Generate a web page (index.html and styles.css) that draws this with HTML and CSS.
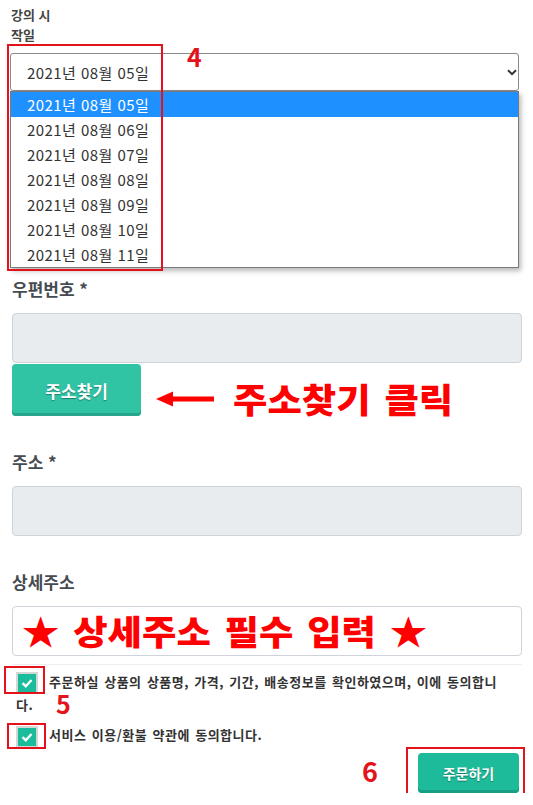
FILE: index.html
```html
<!DOCTYPE html>
<html lang="ko">
<head>
<meta charset="utf-8">
<title>주문하기</title>
<link rel="stylesheet" href="styles.css">
</head>
<body>
<main class="form">
  <section class="field-date">
    <label class="label-narrow">강의 시작일</label>
    <div class="select-wrap">
      <div class="select">
        <span>2021년 08월 05일</span>
        <svg class="chev" width="10" height="7" viewBox="0 0 10 7"><path d="M1 1.2 L5 5.2 L9 1.2" fill="none" stroke="#333" stroke-width="2"/></svg>
      </div>
      <ul class="listbox">
        <li class="active">2021년 08월 05일</li>
        <li>2021년 08월 06일</li>
        <li>2021년 08월 07일</li>
        <li>2021년 08월 08일</li>
        <li>2021년 08월 09일</li>
        <li>2021년 08월 10일</li>
        <li>2021년 08월 11일</li>
      </ul>
      <span class="mark mark-date"></span>
      <span class="num num-4">4</span>
    </div>
  </section>

  <section class="field field-first">
    <label class="label">우편번호 *</label>
    <div class="input input-gray"></div>
    <div class="find-row">
      <button class="btn btn-find">주소찾기</button>
      <div class="annot">
        <svg width="58" height="16" viewBox="0 0 58 16"><polygon points="0,8 17,0.5 17,15.5" fill="#f00"/><rect x="15" y="5.5" width="43" height="5" fill="#f00"/></svg>
        <span class="big">주소찾기 클릭</span>
      </div>
    </div>
  </section>

  <section class="field">
    <label class="label">주소 *</label>
    <div class="input input-gray"></div>
  </section>

  <section class="field">
    <label class="label">상세주소</label>
    <div class="input input-white"><span class="big">★ 상세주소 필수 입력 ★</span></div>
  </section>

  <hr class="divider">

  <div class="agree">
    <p class="agree-item agree-one"><span class="check"><svg width="18" height="18" viewBox="0 0 18 18"><path d="M4.5 9.2 L7.8 12.2 L13.5 6" fill="none" stroke="#fff" stroke-width="2.4"/></svg><span class="mark mark-c1"></span></span>주문하실 상품의 상품명, 가격, 기간, 배송정보를 확인하였으며, 이에 동의합니다.<span class="num num-5">5</span></p>
    <p class="agree-item"><span class="check"><svg width="18" height="18" viewBox="0 0 18 18"><path d="M4.5 9.2 L7.8 12.2 L13.5 6" fill="none" stroke="#fff" stroke-width="2.4"/></svg><span class="mark mark-c2"></span></span>서비스 이용/환불 약관에 동의합니다.</p>
  </div>

  <div class="submit-row">
    <div class="submit-wrap">
      <button class="btn btn-order">주문하기</button>
      <span class="mark mark-order"></span>
      <span class="num num-6">6</span>
    </div>
  </div>
</main>
</body>
</html>
```

FILE: styles.css
```css
* { box-sizing: border-box; }
html, body { margin: 0; padding: 0; background: #fff; }
body {
  font-family: "Noto Sans CJK KR", "Noto Sans", sans-serif;
  color: #333;
}
.form { padding: 5px 11px 0 12px; }

.label-narrow {
  display: block;
  width: 48px;
  font-size: 13px;
  font-weight: 700;
  line-height: 20px;
  color: #444;
  word-break: break-all;
  margin-left: -1px;
}
.select-wrap {
  position: relative;
  margin: 8px 3px 0 -2px;
}
.select {
  height: 38px;
  border: 1px solid #8a8a8a;
  border-radius: 3px;
  display: flex;
  align-items: center;
  justify-content: space-between;
  padding: 0 1px 0 16px;
  font-size: 15px;
  letter-spacing: 0.45px;
  color: #333;
  background: #fff;
}
.listbox {
  list-style: none;
  margin: 0;
  padding: 0;
  border: 1px solid #7a7a7a;
  background: #fff;
  box-shadow: 2px 3px 5px rgba(0,0,0,.28);
}
.listbox li {
  height: 25px;
  line-height: 25px;
  padding-left: 16px;
  font-size: 15px;
  letter-spacing: 0.45px;
  color: #333;
}
.listbox li.active { background: #1e90ff; color: #fff; }

.mark {
  position: absolute;
  border: 2px solid #e3121b;
  pointer-events: none;
}
.num {
  position: absolute;
  color: #e3121b;
  font-weight: 700;
  font-size: 25px;
  line-height: 25px;
  letter-spacing: 0;
  word-spacing: 0;
}
.mark-date { left: -3px; top: -9px; width: 156px; height: 227px; }
.num-4 { left: 177px; top: -9px; }

.field { margin-top: 33px; }
.field-first { margin-top: 8px; }
.label {
  display: block;
  font-size: 17px;
  font-weight: 700;
  line-height: 25px;
  color: #464b52;
  margin-bottom: 12px;
}
.input {
  height: 50px;
  border: 1px solid #ced4da;
  border-radius: 4px;
}
.input-gray { background: #e9ecef; }
.input-white {
  background: #fff;
  display: flex;
  align-items: center;
  padding-left: 9px;
}
.big {
  display: inline-block;
  color: #f00;
  font-size: 34px;
  font-weight: 900;
  line-height: 1;
  word-spacing: 3px;
  white-space: nowrap;
  transform: scaleX(1.1);
  transform-origin: left center;
}

.find-row {
  display: flex;
  align-items: center;
  height: 52px;
  margin-top: 1px;
}
.btn {
  font: inherit;
  border: 0;
  border-radius: 4px;
  color: #fff;
  font-weight: 700;
  text-shadow: 0 1px 1px rgba(0,0,0,.35);
  cursor: pointer;
}
.btn-find {
  width: 129px;
  height: 52px;
  font-size: 17px;
  background: #30c3a4;
  box-shadow: inset 0 -3px 0 #27a68b;
}
.annot {
  display: flex;
  align-items: center;
  gap: 19px;
  margin: 18px 0 0 15px;
}

.divider {
  border: 0;
  border-top: 1px solid #eee;
  margin: 8px 0 0;
}

.agree { padding: 6px 17px 0 4px; }
.agree-item {
  position: relative;
  margin: 0;
  font-size: 13px;
  font-weight: 700;
  line-height: 22px;
  color: #333;
  letter-spacing: 0.5px;
  word-spacing: 1.2px;
  word-break: break-all;
}
.agree-item + .agree-item { margin-top: 8px; }
.check {
  position: relative;
  display: inline-flex;
  align-items: center;
  justify-content: center;
  width: 22px;
  height: 22px;
  border: 2px solid #d3d8d6;
  background: #1abc9c;
  vertical-align: middle;
  margin-right: 11px;
}
.mark-c1 { left: -14px; top: -8px; width: 41px; height: 28px; }
.mark-c2 { left: -11px; top: -5px; width: 39px; height: 26px; }
.num-5 { left: 40px; top: 20px; }

.submit-row {
  display: flex;
  justify-content: flex-end;
  margin: 5px 3px 0 0;
}
.submit-wrap { position: relative; }
.btn-order {
  display: block;
  width: 101px;
  height: 40px;
  font-size: 14px;
  background: #1dbb99;
  box-shadow: inset 0 -3px 0 #179f83;
}
.mark-order { left: -12px; top: -6px; width: 119px; height: 54px; }
.num-6 { left: -56px; top: 4px; font-size: 27px; line-height: 27px; }
```
